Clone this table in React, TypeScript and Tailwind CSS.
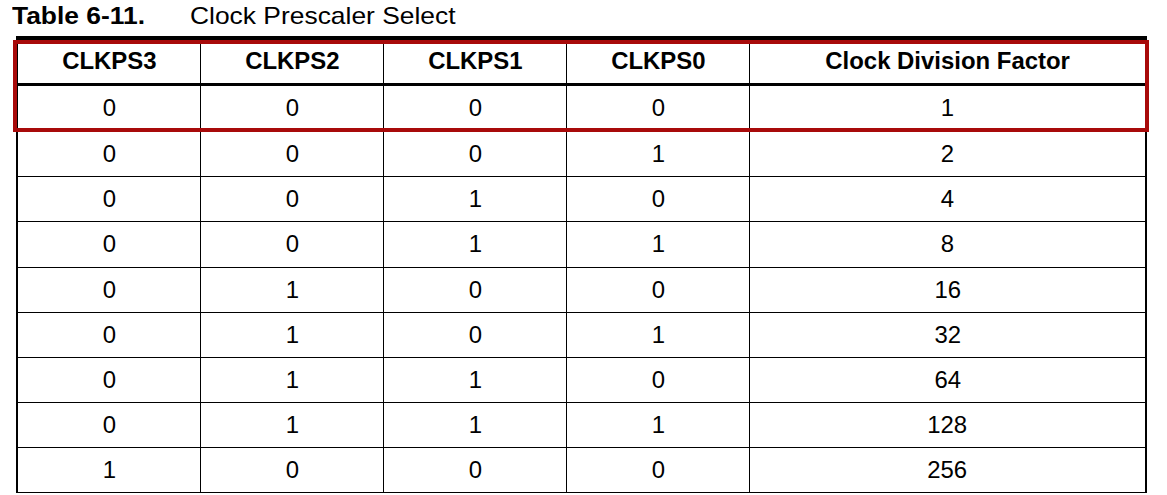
import React from "react";

const rows: [string, string, string, string, string][] = [
  ["0", "0", "0", "0", "1"],
  ["0", "0", "0", "1", "2"],
  ["0", "0", "1", "0", "4"],
  ["0", "0", "1", "1", "8"],
  ["0", "1", "0", "0", "16"],
  ["0", "1", "0", "1", "32"],
  ["0", "1", "1", "0", "64"],
  ["0", "1", "1", "1", "128"],
  ["1", "0", "0", "0", "256"],
];

const rowHeights = ["h-[46px]", "h-[45px]", "h-[45px]", "h-[46px]", "h-[45px]", "h-[45px]", "h-[45px]", "h-[45px]", "h-[45px]"];

const headers = ["CLKPS3", "CLKPS2", "CLKPS1", "CLKPS0", "Clock Division Factor"];

function Cell({ children, last, bold }: { children: React.ReactNode; last?: boolean; bold?: boolean }) {
  return (
    <div
      className={
        "flex items-center justify-center " +
        (last ? "" : "border-r border-black ") +
        (bold ? "font-bold" : "")
      }
    >
      <span className="inline-block scale-x-[1.04] text-[23px] leading-[23px] text-black">{children}</span>
    </div>
  );
}

export default function App() {
  return (
    <div
      className="relative w-[1167px] h-[495px] overflow-hidden bg-white text-black"
      style={{ fontFamily: '"Liberation Sans", Arial, sans-serif' }}
    >
      <div className="flex h-[36px] items-start pt-[4px] pl-[12px]">
        <div className="w-[178px]">
          <span className="inline-block origin-left scale-x-[1.1] text-[24px] font-bold leading-[24px]">Table 6-11.</span>
        </div>
        <span className="inline-block origin-left scale-x-[1.1] text-[24px] leading-[24px]">Clock Prescaler Select</span>
      </div>

      <div className="ml-[16px] w-[1131px] border-x-2 border-t-4 border-black">
        <div className="grid h-[46px] grid-cols-[183px_183px_183px_183px_1fr] border-b-[3px] border-black">
          {headers.map((h, i) => (
            <Cell key={h} bold last={i === 4}>
              {h}
            </Cell>
          ))}
        </div>
        {rows.map((r, ri) => (
          <div
            key={ri}
            className={"grid grid-cols-[183px_183px_183px_183px_1fr] border-b border-black " + rowHeights[ri]}
          >
            {r.map((v, i) => (
              <Cell key={i} last={i === 4}>
                {v}
              </Cell>
            ))}
          </div>
        ))}
      </div>

      <div className="pointer-events-none absolute left-[13px] top-[40px] h-[92px] w-[1136px] border-4 border-[#a80a0a]" />
    </div>
  );
}
